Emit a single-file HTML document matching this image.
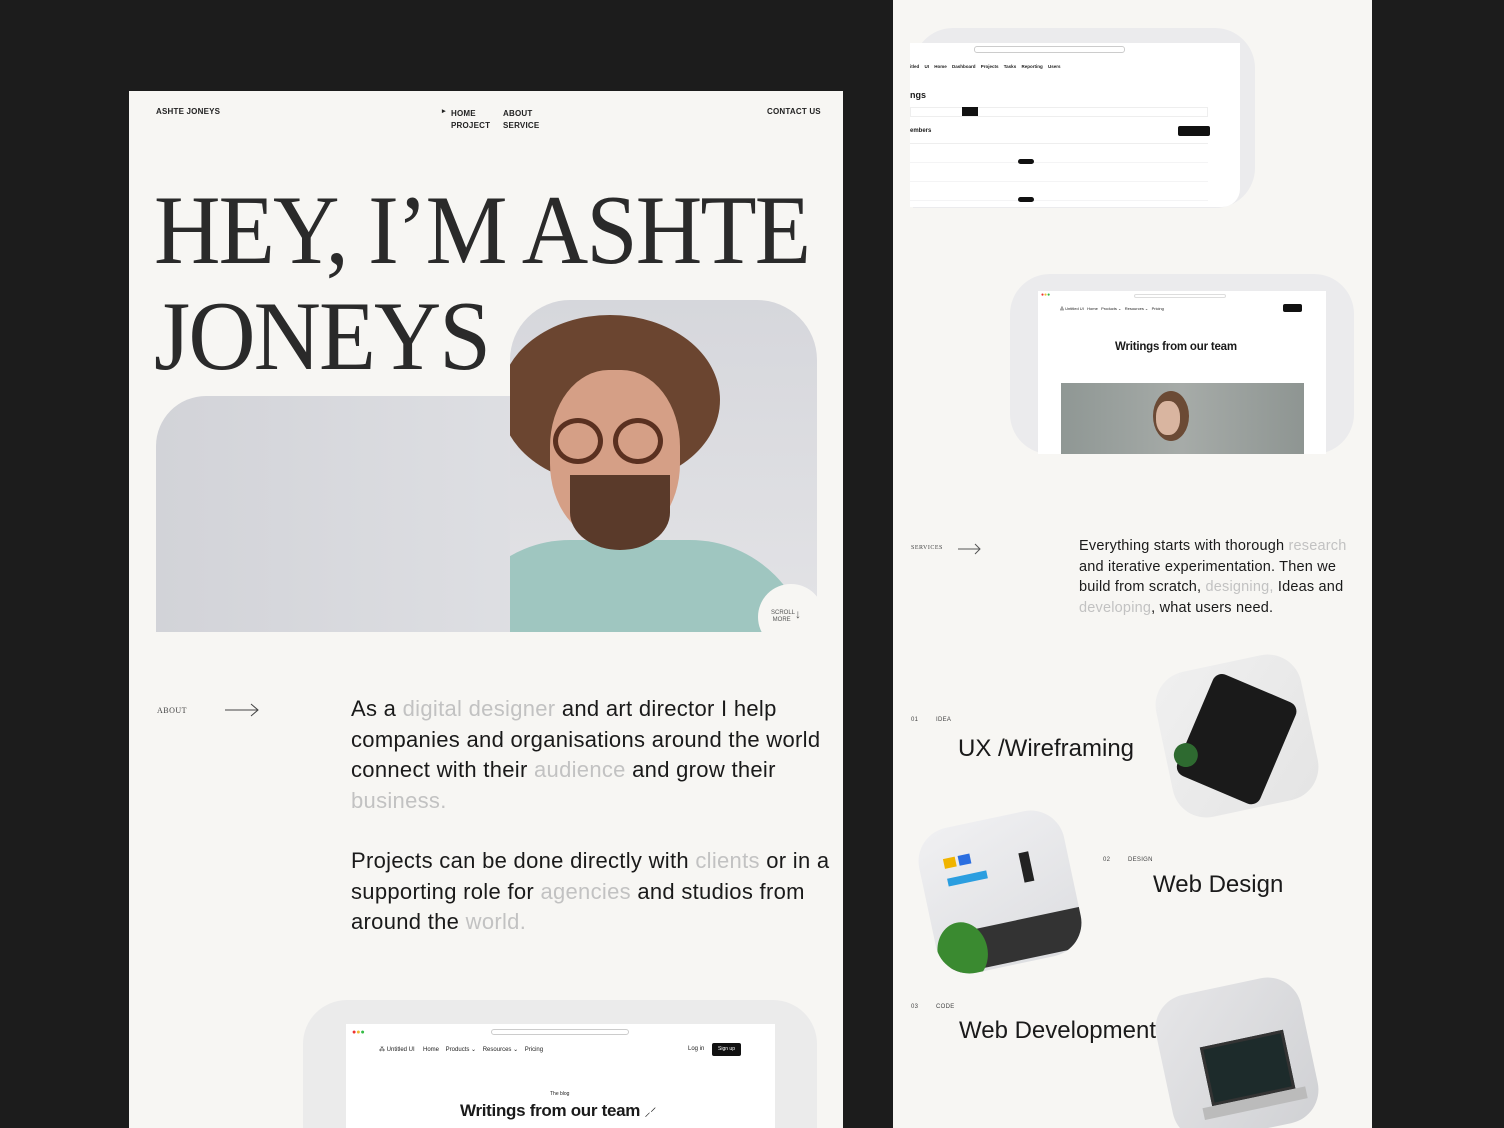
<!DOCTYPE html>
<html><head><meta charset="utf-8"><style>
*{margin:0;padding:0;box-sizing:border-box}
html,body{width:1504px;height:1128px;overflow:hidden}
body{background:#1c1c1c;position:relative;font-family:"Liberation Sans",sans-serif;color:#1a1a1a}
.abs{position:absolute}
.panel{background:#f7f6f3}
.nav{font-size:8px;letter-spacing:.2px;color:#222;font-weight:bold}
.big{font-family:"Liberation Serif",serif;font-size:99px;line-height:1;color:#2a2a2a;white-space:nowrap;transform-origin:0 0;letter-spacing:-2px}
.p{font-size:22px;line-height:30.5px;letter-spacing:.3px;color:#1a1a1a;white-space:nowrap}
.g{color:#c2c2c2}
.lab{font-family:"Liberation Serif",serif;font-size:8px;letter-spacing:.5px;color:#444}
.browser{background:#fff}
.svc{font-size:24px;color:#1a1a1a;letter-spacing:0}
.sm{font-size:6px;color:#444;letter-spacing:.3px}
.tile{position:absolute;border-radius:34px;overflow:hidden}
</style></head><body>
<div class="abs panel" style="left:129px;top:91px;width:714px;height:1037px"></div>
<div class="abs nav" style="left:156px;top:107px">ASHTE JONEYS</div>
<div class="abs nav" style="left:442px;top:107px;font-size:7px">▸</div>
<div class="abs nav" style="left:451px;top:108px;line-height:12px">HOME<br>PROJECT</div>
<div class="abs nav" style="left:503px;top:108px;line-height:12px">ABOUT<br>SERVICE</div>
<div class="abs nav" style="left:767px;top:107px">CONTACT US</div>
<div class="abs big" style="left:154px;top:181px;transform:scaleX(.93)">HEY, I’M ASHTE</div>
<div class="abs big" style="left:154px;top:287px;transform:scaleX(.94)">JONEYS</div>
<!-- photo -->
<div class="abs" style="left:156px;top:396px;width:400px;height:236px;background:linear-gradient(90deg,#d2d3d8,#dfe0e4);border-radius:50px 0 0 0"></div>
<div class="abs" style="left:510px;top:300px;width:307px;height:332px;background:linear-gradient(180deg,#d6d7dc,#e3e3e6);border-radius:60px 60px 0 0;overflow:hidden">
 <div class="abs" style="left:-60px;top:240px;width:360px;height:140px;background:#9fc6c0;border-radius:120px 120px 0 0"></div>
 <div class="abs" style="left:-10px;top:15px;width:220px;height:170px;background:#6b4530;border-radius:50%"></div>
 <div class="abs" style="left:40px;top:70px;width:130px;height:170px;background:#d59f86;border-radius:45%"></div>
 <div class="abs" style="left:60px;top:175px;width:100px;height:75px;background:#5a3a2a;border-radius:0 0 50% 50%"></div>
 <div class="abs" style="left:43px;top:118px;width:50px;height:46px;border:5px solid #5a3020;border-radius:50%"></div>
 <div class="abs" style="left:103px;top:118px;width:50px;height:46px;border:5px solid #5a3020;border-radius:50%"></div>
</div>
<div class="abs" style="left:758px;top:584px;width:66px;height:66px;border-radius:50%;background:#f7f6f3"></div>
<div class="abs" style="left:771px;top:610px;font-size:6px;line-height:7px;color:#555">SCROLL<br>&nbsp;MORE</div>
<div class="abs" style="left:795px;top:607px;font-size:12px;color:#555">↓</div>
<!-- about -->
<div class="abs lab" style="left:157px;top:706px">ABOUT</div>
<svg class="abs" style="left:224px;top:702px" width="36" height="16"><path d="M1 8H34M27 2L34 8L27 14" stroke="#444" fill="none" stroke-width="1"/></svg>
<div class="abs p" style="left:351px;top:694px">As a <span class="g">digital designer</span> and art director I help<br>companies and organisations around the world<br>connect with their <span class="g">audience</span> and grow their<br><span class="g">business.</span></div>
<div class="abs p" style="left:351px;top:846px">Projects can be done directly with <span class="g">clients</span> or in a<br>supporting role for <span class="g">agencies</span> and studios from<br>around the <span class="g">world.</span></div>
<!-- bottom mockup -->
<div class="abs" style="left:303px;top:1000px;width:514px;height:128px;background:#ebebeb;border-radius:44px 44px 0 0"></div>
<div class="abs browser" style="left:346px;top:1024px;width:429px;height:104px">
 <div class="abs" style="left:6px;top:5px;font-size:7px;color:#e33">●<span style="color:#eb3">●</span><span style="color:#3b4">●</span></div>
 <div class="abs" style="left:145px;top:5px;width:138px;height:6px;border:1px solid #ccc;border-radius:3px"></div>
 <div class="abs" style="left:33px;top:22px;font-size:6px;color:#222">⁂ Untitled UI &nbsp;&nbsp;&nbsp; Home &nbsp;&nbsp; Products ⌄ &nbsp;&nbsp; Resources ⌄ &nbsp;&nbsp; Pricing</div>
 <div class="abs" style="left:342px;top:22px;font-size:6px;color:#222">Log in</div>
 <div class="abs" style="left:366px;top:19px;width:29px;height:13px;background:#111;border-radius:2px;color:#fff;font-size:5px;text-align:center;line-height:13px">Sign up</div>
 <div class="abs" style="left:204px;top:67px;font-size:5px">The blog</div>
 <div class="abs" style="left:114px;top:77px;font-size:17px;font-weight:bold;letter-spacing:-.3px">Writings from our team <span style="font-weight:normal;font-size:12px">⸝⸍</span></div>
</div>
<!-- right panel -->
<div class="abs panel" style="left:893px;top:0;width:479px;height:1128px"></div>
<div class="abs" style="left:913px;top:28px;width:342px;height:180px;background:#ebebed;border-radius:40px 40px 40px 0"></div>
<div class="abs browser" style="left:910px;top:43px;width:330px;height:164px;border-radius:0 0 18px 0;overflow:hidden">
 <div class="abs" style="left:64px;top:3px;width:151px;height:7px;border:1px solid #ccc;border-radius:3px"></div>
 <div class="abs" style="left:0;top:21px;font-size:4.5px;font-weight:bold;word-spacing:4px">itled UI Home Dashboard Projects Tasks Reporting Users</div>
 <div class="abs" style="left:0;top:47px;font-size:9px;font-weight:bold">ngs</div>
 <div class="abs" style="left:0;top:64px;width:298px;height:10px;border:1px solid #eee"></div>
 <div class="abs" style="left:52px;top:64px;width:16px;height:9px;background:#111"></div>
 <div class="abs" style="left:0;top:85px;font-size:6px;font-weight:bold">embers</div>
 <div class="abs" style="left:268px;top:83px;width:32px;height:10px;background:#111;border-radius:2px"></div>
 <div class="abs" style="left:0;top:100px;width:298px;height:64px;border-top:1px solid #eee;background:repeating-linear-gradient(#fff 0 18px,#f4f4f5 18px 19px)"></div>
 <div class="abs" style="left:108px;top:116px;width:16px;height:5px;background:#111;border-radius:3px"></div>
 <div class="abs" style="left:108px;top:154px;width:16px;height:5px;background:#111;border-radius:3px"></div>
</div>
<div class="abs" style="left:1010px;top:274px;width:344px;height:180px;background:#ebebed;border-radius:40px"></div>
<div class="abs browser" style="left:1038px;top:291px;width:288px;height:163px">
 <div class="abs" style="left:3px;top:1px;font-size:5px;color:#e33">●<span style="color:#eb3">●</span><span style="color:#3b4">●</span></div>
 <div class="abs" style="left:96px;top:3px;width:92px;height:4px;border:1px solid #ddd;border-radius:2px"></div>
 <div class="abs" style="left:22px;top:15px;font-size:4px">⁂ Untitled UI &nbsp; Home &nbsp; Products ⌄ &nbsp; Resources ⌄ &nbsp; Pricing</div>
 <div class="abs" style="left:245px;top:13px;width:19px;height:8px;background:#111;border-radius:2px"></div>
 <div class="abs" style="left:77px;top:50px;font-size:11.5px;font-weight:bold;letter-spacing:-.2px">Writings from our team</div>
 <div class="abs" style="left:23px;top:92px;width:243px;height:71px;background:linear-gradient(90deg,#8f9794,#a6aba8 50%,#8e9592)"></div>
 <div class="abs" style="left:115px;top:100px;width:36px;height:50px;background:#6b4a35;border-radius:50%"></div>
 <div class="abs" style="left:118px;top:110px;width:24px;height:34px;background:#d9b5a0;border-radius:45%"></div>
</div>
<div class="abs lab" style="left:911px;top:545px;font-size:6px">SERVICES</div>
<svg class="abs" style="left:957px;top:543px" width="25" height="12"><path d="M1 6H23M18 1L23 6L18 11" stroke="#555" fill="none" stroke-width="1"/></svg>
<div class="abs" style="left:1079px;top:536px;font-size:14.5px;line-height:20.5px;white-space:nowrap;color:#1a1a1a;letter-spacing:.2px">Everything starts with thorough <span class="g">research</span><br>and iterative experimentation. Then we<br>build from scratch, <span class="g">designing,</span> Ideas and<br><span class="g">developing</span>, what users need.</div>
<div class="abs sm" style="left:911px;top:717px">01 &nbsp;&nbsp;&nbsp;&nbsp;&nbsp;&nbsp;&nbsp; IDEA</div>
<div class="abs svc" style="left:958px;top:735px">UX /Wireframing</div>
<div class="tile" style="left:1163px;top:662px;width:148px;height:148px;transform:rotate(-12deg);background:linear-gradient(135deg,#f0f0f0,#e4e4e4)">
 <div class="abs" style="left:28px;top:22px;width:90px;height:110px;background:#1a1a1a;border-radius:10px;transform:rotate(35deg)"></div>
 <div class="abs" style="left:8px;top:70px;width:24px;height:24px;background:#2e6a30;border-radius:50%"></div>
</div>
<div class="abs sm" style="left:1103px;top:857px">02 &nbsp;&nbsp;&nbsp;&nbsp;&nbsp;&nbsp;&nbsp; DESIGN</div>
<div class="abs svc" style="left:1153px;top:871px">Web Design</div>
<div class="tile" style="left:926px;top:818px;width:148px;height:148px;transform:rotate(-12deg);background:linear-gradient(160deg,#f0f0f2,#dcdde0)">
 <div class="abs" style="left:10px;top:105px;width:150px;height:40px;background:#333"></div>
 <div class="abs" style="left:0;top:95px;width:50px;height:60px;background:#3a8a30;border-radius:50%"></div>
 <div class="abs" style="left:25px;top:30px;width:12px;height:10px;background:#f0b400"></div>
 <div class="abs" style="left:40px;top:30px;width:12px;height:10px;background:#2b6ee0"></div>
 <div class="abs" style="left:25px;top:50px;width:40px;height:8px;background:#2b9ee0"></div>
 <div class="abs" style="left:100px;top:40px;width:10px;height:30px;background:#222"></div>
</div>
<div class="abs sm" style="left:911px;top:1004px">03 &nbsp;&nbsp;&nbsp;&nbsp;&nbsp;&nbsp;&nbsp; CODE</div>
<div class="abs svc" style="left:959px;top:1017px">Web Development</div>
<div class="tile" style="left:1163px;top:985px;width:148px;height:148px;transform:rotate(-12deg);background:linear-gradient(135deg,#e6e6e8,#d0d1d4)">
 <div class="abs" style="left:40px;top:55px;width:85px;height:60px;background:#1d2b2b;border:3px solid #333"></div>
 <div class="abs" style="left:30px;top:115px;width:105px;height:12px;background:#bbb"></div>
</div>
</body></html>
